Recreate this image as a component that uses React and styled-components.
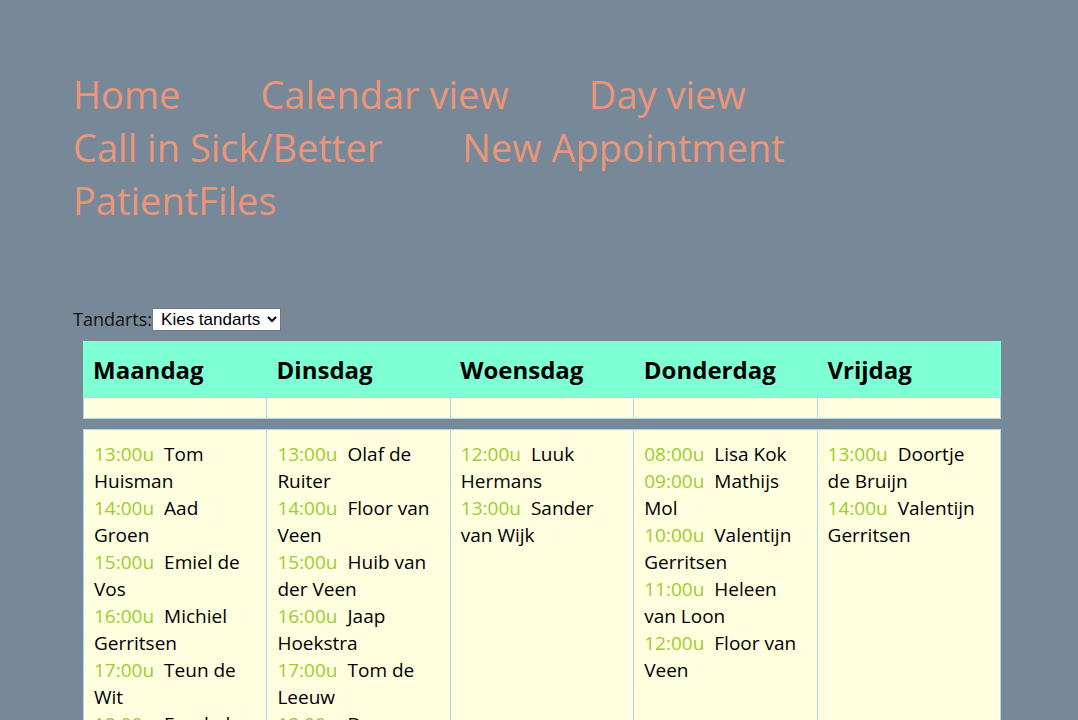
import React from 'react';
import styled, { createGlobalStyle } from 'styled-components';

const GlobalStyle = createGlobalStyle`
    body {
        margin: 8px;
        background: #778899;
        font-family: "Open Sans", "Noto Sans", sans-serif;
    }
`;

const Main = styled.div`
    padding: 60px 0 0 65px;
`;

const Nav = styled.nav`
    display: flex;
    flex-wrap: wrap;
    column-gap: 80px;
    width: 935px;
`;

const NavLink = styled.a`
    color: #e9967a;
    font-size: 38px;
    line-height: 53px;
    text-decoration: none;
    cursor: pointer;
`;

const Picker = styled.div`
    display: flex;
    align-items: center;
    margin-top: 81px;
    font-size: 18px;
    color: #111;
    height: 22px;
`;

const Select = styled.select`
    font-family: "Liberation Sans", Arial, sans-serif;
    font-size: 17px;
    height: 23px;
    border: 1px solid #767676;
    border-radius: 0;
    background: #fff;
    color: #000;
    padding: 0 3px 0 4px;
`;

const Week = styled.div`
    margin: 11px 0 0 10px;
    width: 918px;
`;

const Grid = styled.div`
    display: grid;
    grid-template-columns: repeat(5, 1fr);
    gap: ${props => props.lined ? '1px' : '0'};
    padding: ${props => props.lined ? '1px' : '0'};
    background: ${props => props.lined ? '#add8e6' : '#7fffd4'};
    margin-top: ${props => props.spaced ? '10px' : '0'};
`;

const DayHead = styled.div`
    height: 56px;
    display: flex;
    align-items: center;
    padding-left: 10px;
    font-size: 24px;
    font-weight: 700;
    color: #000;
`;

const Cell = styled.div`
    background: #ffffe0;
    min-height: ${props => props.empty ? '20px' : '300px'};
    padding: ${props => props.empty ? '0' : '11px 12px 0 10px'};
`;

const Entry = styled.div`
    font-size: 19px;
    line-height: 27px;
    color: #000;
`;

const Time = styled.span`
    color: #9acd32;
    margin-right: 10px;
`;

const days = [
    { name: 'Maandag', items: [
        ['13:00u', 'Tom Huisman'], ['14:00u', 'Aad Groen'], ['15:00u', 'Emiel de Vos'],
        ['16:00u', 'Michiel Gerritsen'], ['17:00u', 'Teun de Wit'], ['18:00u', 'Frank de Jong'],
    ]},
    { name: 'Dinsdag', items: [
        ['13:00u', 'Olaf de Ruiter'], ['14:00u', 'Floor van Veen'], ['15:00u', 'Huib van der Veen'],
        ['16:00u', 'Jaap Hoekstra'], ['17:00u', 'Tom de Leeuw'], ['18:00u', 'Daan Visser'],
    ]},
    { name: 'Woensdag', items: [
        ['12:00u', 'Luuk Hermans'], ['13:00u', 'Sander van Wijk'],
    ]},
    { name: 'Donderdag', items: [
        ['08:00u', 'Lisa Kok'], ['09:00u', 'Mathijs Mol'], ['10:00u', 'Valentijn Gerritsen'],
        ['11:00u', 'Heleen van Loon'], ['12:00u', 'Floor van Veen'],
    ]},
    { name: 'Vrijdag', items: [
        ['13:00u', 'Doortje de Bruijn'], ['14:00u', 'Valentijn Gerritsen'],
    ]},
];

const links = ['Home', 'Calendar view', 'Day view', 'Call in Sick/Better', 'New Appointment', 'PatientFiles'];

export default function App() {
    return (
        <Main>
            <GlobalStyle/>
            <Nav>
                {links.map(l => <NavLink key={l}>{l}</NavLink>)}
            </Nav>
            <Picker>
                Tandarts:
                <Select defaultValue="">
                    <option value="">Kies tandarts</option>
                </Select>
            </Picker>
            <Week>
                <Grid>
                    {days.map(d => <DayHead key={d.name}>{d.name}</DayHead>)}
                </Grid>
                <Grid lined>
                    {days.map(d => <Cell empty key={d.name}/>)}
                </Grid>
                <Grid lined spaced>
                    {days.map(d => (
                        <Cell key={d.name}>
                            {d.items.map(([t, n]) => (
                                <Entry key={t}><Time>{t}</Time>{n}</Entry>
                            ))}
                        </Cell>
                    ))}
                </Grid>
            </Week>
        </Main>
    );
}
